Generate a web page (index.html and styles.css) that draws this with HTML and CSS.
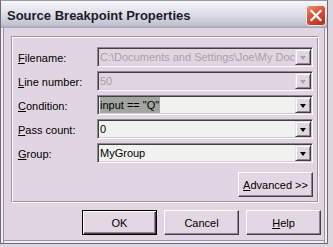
FILE: index.html
```html
<!DOCTYPE html>
<html lang="en">
<head>
    <meta charset="UTF-8">
    <title>Source Breakpoint Properties</title>
    <link rel="stylesheet" href="styles.css">
</head>
<body>
    <div class="window">
        <div class="titlebar">
            <span class="title">Source Breakpoint Properties</span>
            <svg class="close-btn" width="20" height="21" viewBox="0 0 20 21">
                <defs>
                    <linearGradient id="closeFill" x1="0" y1="0" x2="0.6" y2="1">
                        <stop offset="0" stop-color="#f09a80"/>
                        <stop offset="0.45" stop-color="#dc5a3c"/>
                        <stop offset="1" stop-color="#b8361e"/>
                    </linearGradient>
                </defs>
                <rect x="0.5" y="0.5" width="19" height="20" rx="3" fill="url(#closeFill)" stroke="#f4f0f0"/>
                <path d="M5.5 6 L14.5 15 M14.5 6 L5.5 15" stroke="#fff" stroke-width="2.2" stroke-linecap="square"/>
            </svg>
        </div>

        <div class="client">
            <div class="groupbox">
                <div class="form-row">
                    <label class="field-label"><u>F</u>ilename:</label>
                    <div class="combo disabled">
                        <span class="combo-text">C:\Documents and Settings\Joe\My Documents\Projects</span>
                        <span class="combo-btn"><span class="arrow"></span></span>
                    </div>
                </div>
                <div class="form-row">
                    <label class="field-label"><u>L</u>ine number:</label>
                    <div class="combo disabled">
                        <span class="combo-text">50</span>
                        <span class="combo-btn"><span class="arrow"></span></span>
                    </div>
                </div>
                <div class="form-row">
                    <label class="field-label"><u>C</u>ondition:</label>
                    <div class="combo">
                        <span class="combo-text"><span class="selected">input == "Q"</span></span>
                        <span class="combo-btn"><span class="arrow"></span></span>
                    </div>
                </div>
                <div class="form-row">
                    <label class="field-label"><u>P</u>ass count:</label>
                    <div class="combo">
                        <span class="combo-text">0</span>
                        <span class="combo-btn"><span class="arrow"></span></span>
                    </div>
                </div>
                <div class="form-row">
                    <label class="field-label"><u>G</u>roup:</label>
                    <div class="combo">
                        <span class="combo-text">MyGroup</span>
                        <span class="combo-btn"><span class="arrow"></span></span>
                    </div>
                </div>

                <div class="group-actions">
                    <button class="btn"><u>A</u>dvanced &gt;&gt;</button>
                </div>
            </div>

            <div class="dialog-buttons">
                <button class="btn default-btn">OK</button>
                <button class="btn">Cancel</button>
                <button class="btn"><u>H</u>elp</button>
            </div>
        </div>
    </div>
</body>
</html>
```

FILE: styles.css
```css
body {
    margin: 0;
    padding: 0;
    background-color: #dcd6de;
    font-family: 'Liberation Sans', Arial, sans-serif;
    font-size: 11px;
    color: #000;
}
.window {
    width: 328px;
    height: 244px;
    box-sizing: border-box;
    border: 1px solid #6c6a7a;
    border-top-color: #9a98a8;
    display: flex;
    flex-direction: column;
    background-color: #e1d5e1;
}
.titlebar {
    height: 27px;
    flex-shrink: 0;
    display: flex;
    align-items: center;
    justify-content: space-between;
    padding: 0 1px 0 6px;
    background: linear-gradient(to bottom, #f6f6f8 0%, #ececf2 20%, #dadae4 55%, #c2c2d0 88%, #a4a4b6 100%);
}
.title {
    font-size: 13px;
    font-weight: bold;
    color: #1c1c2c;
    margin-top: 1px;
}
.close-btn {
    display: block;
    margin-top: 1px;
}
.client {
    flex: 1;
    padding: 8px 8px 0 10px;
    box-shadow: inset 2px 0 #f2ecf2, inset 3px 0 #9c94a2, inset -2px 0 #f2ecf2, inset -3px 0 #9c94a2, inset 0 -2px #f2ecf2, inset 0 -3px #9c94a2;
}
.groupbox {
    border: 1px solid;
    border-color: #9d95a2 #fff #fff #9d95a2;
    box-shadow: inset 1px 1px #fff, inset -1px -1px #9d95a2;
    padding: 10px 5px 5px 6px;
    display: flex;
    flex-direction: column;
    gap: 4px;
}
.form-row {
    display: flex;
    align-items: center;
    height: 20px;
}
.field-label {
    width: 79px;
    flex-shrink: 0;
    padding-top: 2px;
}
.combo {
    flex: 1;
    height: 20px;
    box-sizing: border-box;
    display: flex;
    align-items: stretch;
    border: 1px solid;
    border-color: #8c8494 #fff #fff #8c8494;
    box-shadow: inset 1px 1px #404040, inset -1px -1px #d8ccd8;
    padding: 1px;
    background-color: #f1f1ef;
    overflow: hidden;
}
.combo.disabled {
    background-color: #e1d5e1;
    color: #a9a1a9;
}
.combo-text {
    flex: 1;
    padding: 2px 0 0 1px;
    white-space: nowrap;
    overflow: hidden;
}
.selected {
    background-color: #a2a59f;
    padding: 2px 1px 2px 0;
}
.combo-btn {
    width: 16px;
    flex-shrink: 0;
    box-sizing: border-box;
    background-color: #e1d5e1;
    border: 1px solid;
    border-color: #e8dee8 #404040 #404040 #e8dee8;
    box-shadow: inset 1px 1px #fff, inset -1px -1px #8c8494;
    display: flex;
    align-items: center;
    justify-content: center;
}
.arrow {
    width: 0;
    height: 0;
    border-left: 3px solid transparent;
    border-right: 3px solid transparent;
    border-top: 4px solid #000;
    margin-top: 1px;
}
.disabled .arrow {
    border-top-color: #a9a1a9;
}
.group-actions {
    display: flex;
    justify-content: flex-end;
    margin-top: 5px;
}
.btn {
    width: 75px;
    height: 25px;
    box-sizing: border-box;
    font-family: 'Liberation Sans', Arial, sans-serif;
    font-size: 11px;
    color: #000;
    background-color: #e3d7e3;
    border: 1px solid;
    border-color: #fff #404040 #404040 #fff;
    box-shadow: inset -1px -1px #8c8494;
    padding: 0;
}
.default-btn {
    border: 1px solid #000;
    box-shadow: inset 1px 1px #fff, inset -1px -1px #404040, inset -2px -2px #8c8494;
}
.dialog-buttons {
    display: flex;
    justify-content: flex-end;
    gap: 7px;
    margin: 7px -2px 0 0;
}
```
